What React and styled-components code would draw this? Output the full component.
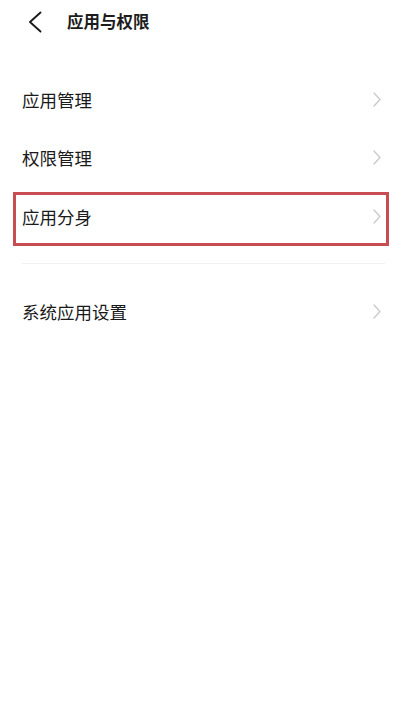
import React from "react";
import styled, { createGlobalStyle } from "styled-components";

const Global = createGlobalStyle`
  html, body { margin: 0; padding: 0; background: #ffffff; }
  body { font-family: "Noto Sans CJK SC", "Noto Sans", sans-serif; }
`;

const Page = styled.div`
  width: 408px;
  min-height: 708px;
  background: #ffffff;
  display: flex;
  flex-direction: column;
`;

const Header = styled.header`
  height: 42px;
  display: flex;
  align-items: center;
  padding-left: 28px;
`;

const BackIcon = styled.svg`
  width: 14px;
  height: 22px;
  flex: none;
  margin-top: 2px;
`;

const Title = styled.h1`
  margin: 0 0 0 25px;
  font-size: 16.5px;
  font-weight: 700;
  color: #1c1c1c;
  letter-spacing: 0;
  line-height: 1;
`;

const List = styled.div`
  display: flex;
  flex-direction: column;
  padding-top: 28px;
`;

const Row = styled.div`
  position: relative;
  height: 58.5px;
  display: flex;
  align-items: center;
  justify-content: space-between;
  padding: 0 27px 0 22px;
`;

const Label = styled.span`
  font-size: 17.5px;
  color: #1a1a1a;
  font-weight: 400;
  line-height: 1;
`;

const Chevron = styled.svg`
  width: 8px;
  height: 15px;
  flex: none;
`;

const Highlight = styled.div`
  position: absolute;
  top: 5px;
  bottom: 0px;
  left: 13px;
  right: 19px;
  border: 3px solid #c94c52;
  pointer-events: none;
`;

const Divider = styled.div`
  height: 1px;
  background: #f1f1f1;
  margin: 17px 23px 19px 22px;
`;

const items = [
  { label: "应用管理" },
  { label: "权限管理" },
  { label: "应用分身", highlighted: true },
];

function RowItem({ label, highlighted }) {
  return (
    <Row>
      <Label>{label}</Label>
      <Chevron viewBox="0 0 8 15">
        <polyline
          points="1,1 7,7.5 1,14"
          fill="none"
          stroke="#c9c9c9"
          strokeWidth="1.3"
          strokeLinecap="round"
          strokeLinejoin="round"
        />
      </Chevron>
      {highlighted && <Highlight />}
    </Row>
  );
}

export default function App() {
  return (
    <>
      <Global />
      <Page>
        <Header>
          <BackIcon viewBox="0 0 14 22">
            <polyline
              points="12.5,1.5 2,11 12.5,20.5"
              fill="none"
              stroke="#1a1a1a"
              strokeWidth="1.9"
              strokeLinecap="round"
              strokeLinejoin="round"
            />
          </BackIcon>
          <Title>应用与权限</Title>
        </Header>
        <List>
          {items.map((it) => (
            <RowItem key={it.label} {...it} />
          ))}
          <Divider />
          <RowItem label="系统应用设置" />
        </List>
      </Page>
    </>
  );
}
